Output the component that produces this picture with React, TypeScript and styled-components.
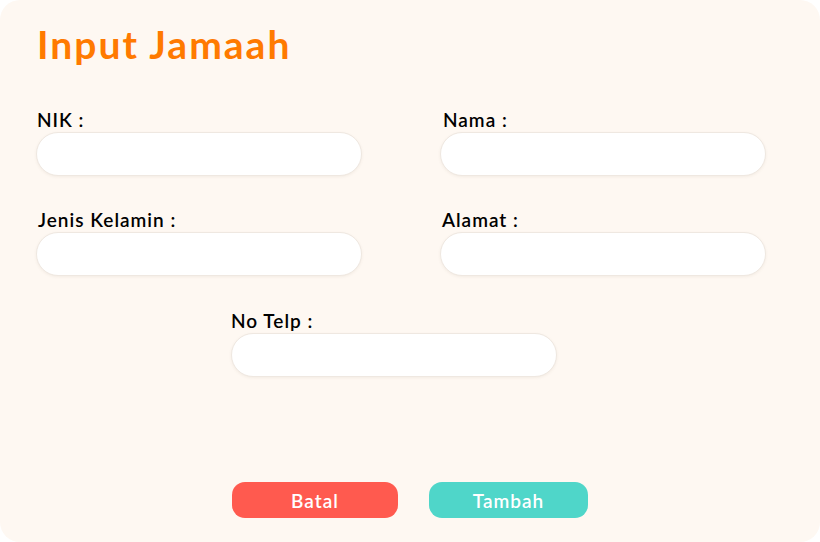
import React from "react";
import styled, { createGlobalStyle } from "styled-components";

const Global = createGlobalStyle`
  html, body { margin: 0; padding: 0; background: #ffffff; }
  * { box-sizing: border-box; }
`;

const Card = styled.div`
  width: 820px;
  height: 542px;
  background: #fef8f2;
  border-radius: 20px;
  padding: 25px 54px 24px 36px;
  display: flex;
  flex-direction: column;
  font-family: Lato, "Noto Sans", sans-serif;
`;

const Title = styled.h1`
  margin: 0 0 46px 1px;
  font-size: 39px;
  line-height: 39px;
  font-weight: 700;
  letter-spacing: 2px;
  color: #ff7a00;
`;

const Grid = styled.div`
  display: grid;
  grid-template-columns: 326px 326px;
  column-gap: 78px;
  row-gap: 34px;
`;

const Field = styled.div<{ $indent?: number }>`
  display: flex;
  flex-direction: column;
  gap: 3px;
  width: 326px;
  margin-left: ${(p) => p.$indent ?? 0}px;
`;

const Label = styled.label<{ $shift?: number }>`
  font-size: 19px;
  line-height: 19px;
  font-weight: 600;
  letter-spacing: 1px;
  color: #000;
  padding-left: ${(p) => p.$shift ?? 1}px;
`;

const Input = styled.input`
  height: 44px;
  width: 100%;
  border: 1px solid #efe8e1;
  border-radius: 22px;
  background: #ffffff;
  box-shadow: 0 1px 3px rgba(120, 90, 60, 0.08);
  outline: none;
  padding: 0 16px;
  font-family: inherit;
  font-size: 16px;
`;

const SingleRow = styled.div`
  display: flex;
  margin-top: 35px;
`;

const Actions = styled.div`
  margin-top: auto;
  display: flex;
  gap: 31px;
  padding-left: 196px;
`;

const Button = styled.button<{ $bg: string; $w: number }>`
  width: ${(p) => p.$w}px;
  height: 36px;
  border: none;
  border-radius: 13px;
  background: ${(p) => p.$bg};
  color: #ffffff;
  font-family: Lato, "Noto Sans", sans-serif;
  font-size: 19px;
  font-weight: 600;
  letter-spacing: 1px;
  cursor: pointer;
  padding: 0;
`;

export default function App() {
  return (
    <>
      <Global />
      <Card>
        <Title>Input Jamaah</Title>
        <Grid>
          <Field>
            <Label>NIK :</Label>
            <Input />
          </Field>
          <Field>
            <Label $shift={3}>Nama :</Label>
            <Input />
          </Field>
          <Field>
            <Label $shift={2}>Jenis Kelamin :</Label>
            <Input />
          </Field>
          <Field>
            <Label $shift={2}>Alamat :</Label>
            <Input />
          </Field>
        </Grid>
        <SingleRow>
          <Field $indent={195}>
            <Label $shift={-1}>No Telp :</Label>
            <Input />
          </Field>
        </SingleRow>
        <Actions>
          <Button $bg="#ff5a4f" $w={166}>Batal</Button>
          <Button $bg="#4fd6c9" $w={159}>Tambah</Button>
        </Actions>
      </Card>
    </>
  );
}
